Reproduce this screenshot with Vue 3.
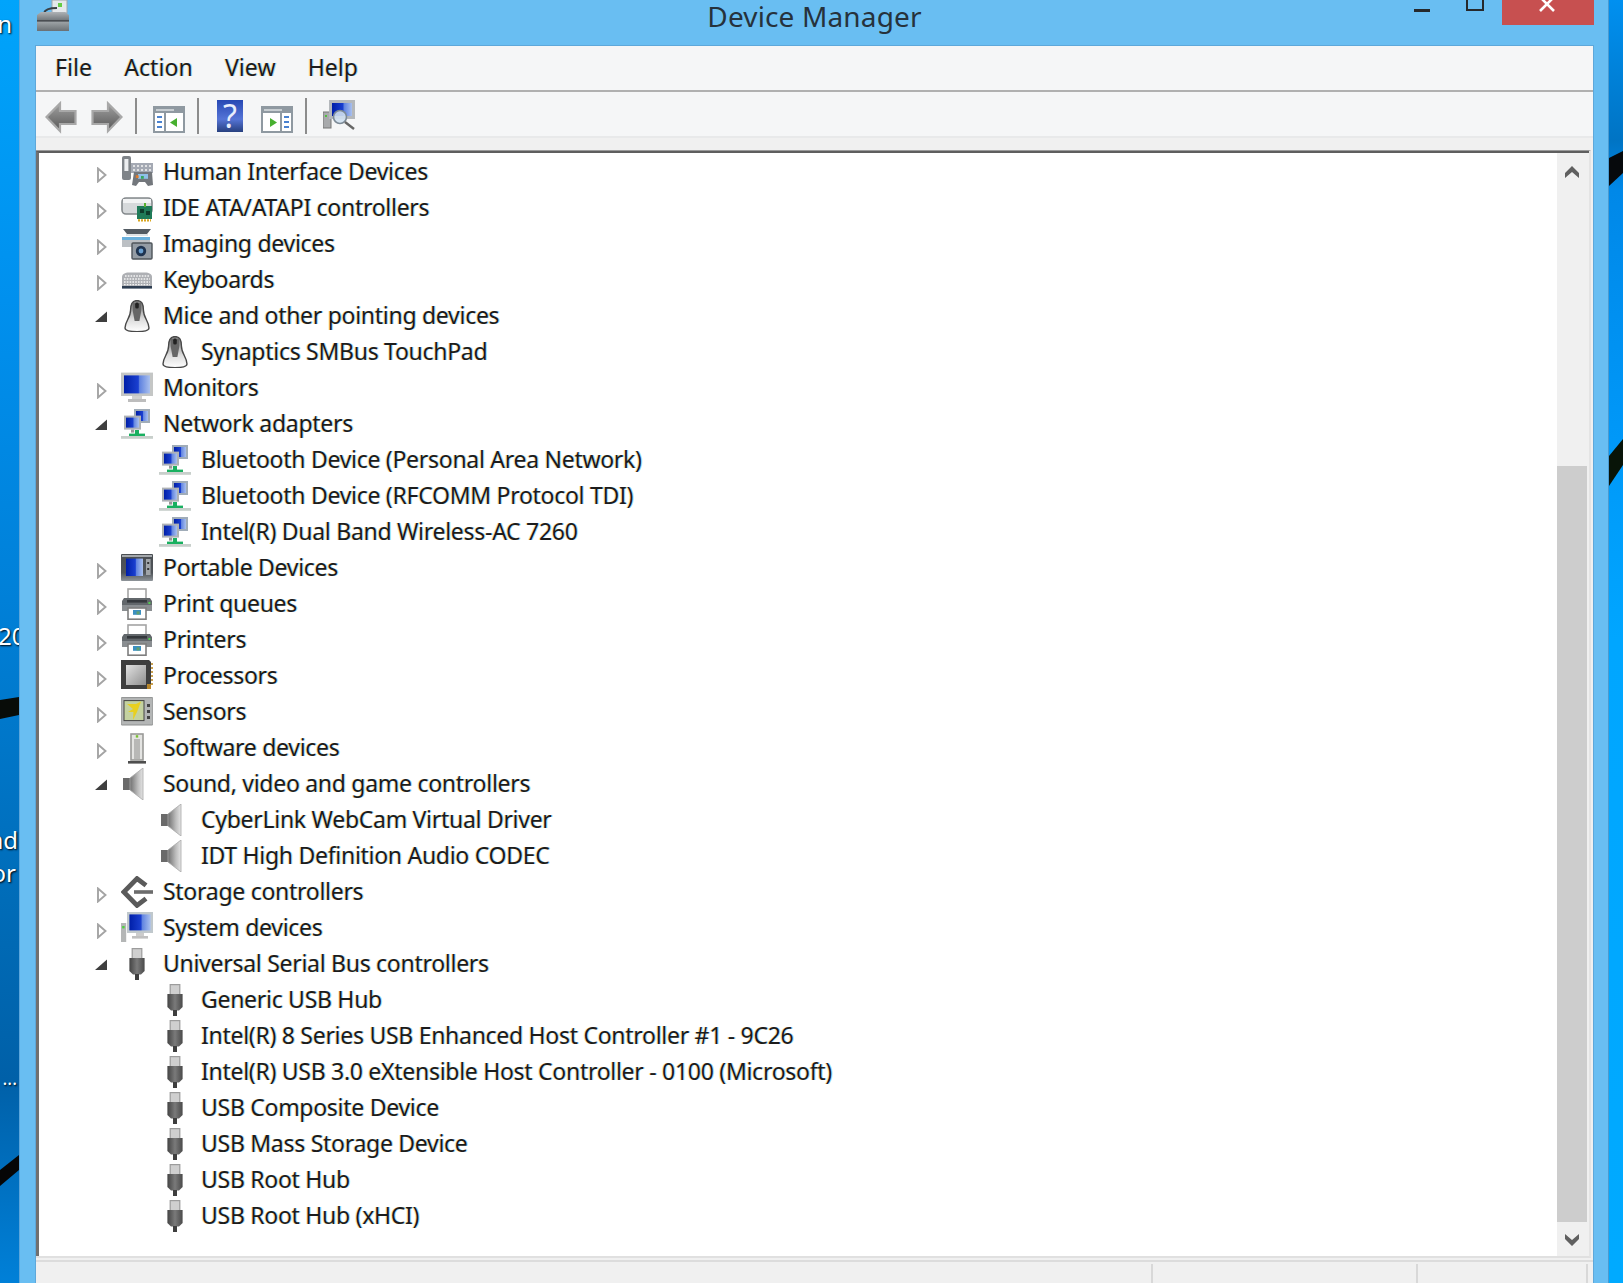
<script setup>
const rows = [
  { t: 'Human Interface Devices', i: 'hid', e: 'c' },
  { t: 'IDE ATA/ATAPI controllers', i: 'ide', e: 'c' },
  { t: 'Imaging devices', i: 'imaging', e: 'c' },
  { t: 'Keyboards', i: 'keyboard', e: 'c' },
  { t: 'Mice and other pointing devices', i: 'mouse', e: 'o' },
  { t: 'Synaptics SMBus TouchPad', i: 'mouse' },
  { t: 'Monitors', i: 'monitor', e: 'c' },
  { t: 'Network adapters', i: 'network', e: 'o' },
  { t: 'Bluetooth Device (Personal Area Network)', i: 'network' },
  { t: 'Bluetooth Device (RFCOMM Protocol TDI)', i: 'network' },
  { t: 'Intel(R) Dual Band Wireless-AC 7260', i: 'network' },
  { t: 'Portable Devices', i: 'portable', e: 'c' },
  { t: 'Print queues', i: 'printer', e: 'c' },
  { t: 'Printers', i: 'printer', e: 'c' },
  { t: 'Processors', i: 'cpu', e: 'c' },
  { t: 'Sensors', i: 'sensor', e: 'c' },
  { t: 'Software devices', i: 'software', e: 'c' },
  { t: 'Sound, video and game controllers', i: 'speaker', e: 'o' },
  { t: 'CyberLink WebCam Virtual Driver', i: 'speaker' },
  { t: 'IDT High Definition Audio CODEC', i: 'speaker' },
  { t: 'Storage controllers', i: 'storage', e: 'c' },
  { t: 'System devices', i: 'system', e: 'c' },
  { t: 'Universal Serial Bus controllers', i: 'usb', e: 'o' },
  { t: 'Generic USB Hub', i: 'usb' },
  { t: 'Intel(R) 8 Series USB Enhanced Host Controller #1 - 9C26', i: 'usb' },
  { t: 'Intel(R) USB 3.0 eXtensible Host Controller - 0100 (Microsoft)', i: 'usb' },
  { t: 'USB Composite Device', i: 'usb' },
  { t: 'USB Mass Storage Device', i: 'usb' },
  { t: 'USB Root Hub', i: 'usb' },
  { t: 'USB Root Hub (xHCI)', i: 'usb' },
]
const menus = ['File', 'Action', 'View', 'Help']
</script>

<template>
  <div class="screen">
    <svg class="defs" width="0" height="0" aria-hidden="true">
      <defs>
        <linearGradient id="gScreen" x1="0" x2="1" y1="0" y2="0"><stop offset="0" stop-color="#001fa8"/><stop offset=".55" stop-color="#1a3fd0"/><stop offset=".6" stop-color="#5f82e0"/><stop offset="1" stop-color="#a9c0ee"/></linearGradient>
        <linearGradient id="gUsb" x1="0" x2="1" y1="0" y2="0"><stop offset="0" stop-color="#444"/><stop offset=".5" stop-color="#7a7a7a"/><stop offset="1" stop-color="#4a4a4a"/></linearGradient>
        <linearGradient id="gMouse" x1="0" x2="0" y1="0" y2="1"><stop offset="0" stop-color="#7a7a7a"/><stop offset=".6" stop-color="#dcdcdc"/><stop offset="1" stop-color="#fff"/></linearGradient>
        <linearGradient id="gCone" x1="0" x2="1" y1="0" y2="0"><stop offset="0" stop-color="#707070"/><stop offset=".6" stop-color="#bcbcbc"/><stop offset="1" stop-color="#e4e4e4"/></linearGradient>
        <linearGradient id="gCpu" x1="0" x2="1" y1="0" y2="1"><stop offset="0" stop-color="#e2e2e2"/><stop offset="1" stop-color="#8e8e8e"/></linearGradient>
        <linearGradient id="gArrow" x1="0" x2="0" y1="0" y2="1"><stop offset="0" stop-color="#a0a0a0"/><stop offset=".5" stop-color="#7c7c7c"/><stop offset="1" stop-color="#565656"/></linearGradient>
        <linearGradient id="gHelp" x1="0" x2="0" y1="0" y2="1"><stop offset="0" stop-color="#2748b4"/><stop offset=".6" stop-color="#5574d6"/><stop offset="1" stop-color="#27407f"/></linearGradient>
        <linearGradient id="gBox" x1="0" x2="0" y1="0" y2="1"><stop offset="0" stop-color="#aeb2b5"/><stop offset=".45" stop-color="#70767a"/><stop offset=".55" stop-color="#9aa0a3"/><stop offset="1" stop-color="#6a7074"/></linearGradient>
        <linearGradient id="gPort" x1="0" x2="0" y1="0" y2="1"><stop offset="0" stop-color="#4a4e52"/><stop offset=".7" stop-color="#50555a"/><stop offset="1" stop-color="#8f959a"/></linearGradient>

        <symbol id="hid" viewBox="0 0 16 16">
          <rect x=".5" y="0" width="4.5" height="12" rx="1" fill="#7f8489"/>
          <rect x="1.700" y="1.500" width="2" height="6" fill="#eceef0"/>
          <rect x="5" y="3.500" width="11" height="5" fill="#a4a9b3"/>
          <path d="M6 5h9M6 7h9" stroke="#f4f4f4" stroke-width=".8" stroke-dasharray="1 1"/>
          <path d="M6.500 8h9l.5 6.500-2.500.5-1.500-2h-3l-1.500 2-2-.5z" fill="#73777c"/>
          <rect x="8.500" y="9" width="5" height="2.400" fill="#8fc0e8"/>
          <rect x="7.400" y="9.600" width="1.400" height="1.400" fill="#e07a2a"/>
          <rect x="10" y="10" width="1.400" height="1.400" fill="#38a860"/>
        </symbol>
        <symbol id="ide" viewBox="0 0 16 16">
          <rect x=".5" y="3" width="15" height="8" rx="2" fill="#d6d9db" stroke="#84898c" stroke-width=".8"/>
          <rect x="1" y="3.500" width="14" height="2" fill="#f2f3f4"/>
          <rect x="8" y="7" width="7.500" height="6.500" fill="#1f7a58"/>
          <rect x="11.500" y="5.500" width="1" height="2" fill="#57b030"/>
          <rect x="9.500" y="8.500" width="2" height="2" fill="#0e3c2c"/>
          <rect x="12.500" y="9.500" width="2" height="2" fill="#0e3c2c"/>
          <path d="M8.500 14.200h6.500" stroke="#d8a520" stroke-width="1.200" stroke-dasharray="1 .5"/>
        </symbol>
        <symbol id="imaging" viewBox="0 0 16 16">
          <path d="M1 .5h14l-2 2.500H3z" fill="#535b63"/>
          <rect x="2.500" y="3" width="11" height="1" fill="#dfe3e6"/>
          <rect x=".5" y="4.500" width="14" height="1.500" fill="#6ab0dc"/>
          <rect x=".5" y="6" width="14" height="3.500" fill="#bcc0c4"/>
          <rect x="5.500" y="7.500" width="10" height="8" rx=".5" fill="#949ca4" stroke="#4e545a" stroke-width=".7"/>
          <circle cx="10" cy="11.500" r="2.600" fill="#1f3450"/>
          <circle cx="10" cy="11.500" r="1.200" fill="#6aa0d0"/>
        </symbol>
        <symbol id="keyboard" viewBox="0 0 16 16">
          <path d="M.5 11.500V6.500C.5 5 2 4.200 4 4.200h8c2 0 3.500.8 3.500 2.300v5z" fill="#aeb0b4"/>
          <path d="M2 6h12M1.500 7.500h13M1.500 9h13M1.500 10.300h13" stroke="#f4f4f4" stroke-width=".7" stroke-dasharray=".8 .6"/>
          <rect x=".5" y="11" width="15" height="1.300" fill="#2e3e52"/>
        </symbol>
        <symbol id="mouse" viewBox="0 0 16 16">
          <path d="M8 .3C5.500.3 4.800 2 4.800 5c0 4-2.800 5.600-2.800 9 0 1.500 3 1.800 6 1.800s6-.3 6-1.800c0-3.400-2.800-5-2.800-9C11.200 2 10.500.3 8 .3z" fill="url(#gMouse)" stroke="#484848" stroke-width=".7"/>
          <path d="M5.800 1.500h4.400v3.500l-1 5.500H6.800l-1-5.500z" fill="#666"/>
          <rect x="7.100" y="1.300" width="1.800" height="3" rx=".8" fill="#222"/>
        </symbol>
        <symbol id="monitor" viewBox="0 0 16 16">
          <rect x="0" y=".3" width="16" height="11.700" fill="#c4c6c5"/>
          <rect x="1.500" y="1.700" width="13" height="9" fill="url(#gScreen)"/>
          <rect x="5.500" y="12" width="5" height="1.500" fill="#d0d0d0"/>
          <rect x="3.500" y="13.500" width="9" height="1.500" fill="#bdbdbd"/>
        </symbol>
        <symbol id="network" viewBox="0 0 16 16">
          <rect x="6.500" y=".5" width="8" height="7" fill="#a0acb8"/>
          <rect x="7.500" y="1.500" width="6" height="5" fill="url(#gScreen)"/>
          <rect x="1.500" y="3.800" width="8.500" height="7" fill="#aeb2b6"/>
          <rect x="2.500" y="4.800" width="6.500" height="5" fill="url(#gScreen)"/>
          <rect x="5" y="10.800" width="1.600" height="1.500" fill="#999"/>
          <rect x="7" y="11" width="2" height="3" fill="#19b060"/>
          <rect x="4" y="12.800" width="8" height="1.800" fill="#19b060"/>
          <rect x="0" y="14" width="16" height="1.400" fill="#c8cfcb"/>
        </symbol>
        <symbol id="portable" viewBox="0 0 16 16">
          <rect x="0" y="1" width="16" height="13.500" rx=".5" fill="url(#gPort)"/>
          <rect x=".5" y="1.500" width="15" height="1" fill="#a4a8ac"/>
          <rect x="2.500" y="3.300" width="8.500" height="8.700" fill="url(#gScreen)"/>
          <rect x="12.500" y="3.500" width="2.300" height="8" fill="#a0a4a8"/>
          <rect x="13.100" y="5" width="1" height="1" fill="#333"/>
          <rect x="13.100" y="8" width="1" height="1" fill="#333"/>
        </symbol>
        <symbol id="printer" viewBox="0 0 16 16">
          <rect x="3.500" y=".5" width="9" height="5.500" fill="#fff" stroke="#a4a4a4" stroke-width=".8"/>
          <path d="M1.500 5h13l1 1.500V11.500h-15V6.500z" fill="#62676b"/>
          <rect x=".5" y="8.500" width="15" height="3" fill="#8a8e91"/>
          <rect x="3" y="6" width="10" height="1.300" fill="#34383c"/>
          <rect x="13.700" y="7" width="1" height="1" fill="#52d050"/>
          <rect x="3.500" y="10" width="9" height="5.600" fill="#fff" stroke="#7e7e7e" stroke-width=".8"/>
          <rect x="6" y="11" width="4" height="2.400" fill="#3c90c0"/>
          <rect x="7.800" y="11.700" width="1.500" height="1.500" fill="#60a070"/>
        </symbol>
        <symbol id="cpu" viewBox="0 0 16 16">
          <path d="M0 0h14l1 1v13.500H0z" fill="#3e3e3e"/>
          <rect x="2.500" y="2.500" width="10" height="10" fill="url(#gCpu)"/>
          <rect x="13" y="12" width="2" height="2.500" fill="#b8862a"/>
          <path d="M15.500 1.500v11" stroke="#c8a050" stroke-width="1" stroke-dasharray="1 1"/>
        </symbol>
        <symbol id="sensor" viewBox="0 0 16 16">
          <rect x="0" y=".8" width="16" height="13.700" rx=".5" fill="#b4b6b6" stroke="#8e9090" stroke-width=".5"/>
          <rect x="1.500" y="2.300" width="10" height="10" fill="#c4d2a0" stroke="#444" stroke-width=".5"/>
          <path d="M3 4h4.500L10 2.800 8 8 6 12 6.200 8H3.500L6 6.500z" fill="#e8d020"/>
          <rect x="13" y="4" width="1.500" height="1.500" fill="#444"/>
          <rect x="13" y="7" width="1.500" height="1.500" fill="#444"/>
          <rect x="13" y="10" width="1.500" height="1.500" fill="#444"/>
        </symbol>
        <symbol id="software" viewBox="0 0 16 16">
          <rect x="5" y="1" width="6" height="13" fill="#e4e4e2" stroke="#9a9a98" stroke-width=".8"/>
          <rect x="6.500" y="3.500" width="3" height="10" fill="#b8b8b6"/>
          <rect x="7.400" y="1.600" width="1.200" height="1.200" fill="#78c030"/>
          <rect x="3.500" y="14.500" width="9" height="1.300" fill="#4e4e4e"/>
        </symbol>
        <symbol id="speaker" viewBox="0 0 16 16">
          <rect x="1" y="5" width="3.800" height="6" fill="#6a6a6a"/>
          <path d="M4.500 5 11 0v16l-6.500-5z" fill="url(#gCone)" stroke="#a8a8a8" stroke-width=".4"/>
        </symbol>
        <symbol id="storage" viewBox="0 0 16 16">
          <path d="M12.500 4.700 8 1.300 1.400 8 8 14.700l4.500-3.400" fill="none" stroke="#5a5a5a" stroke-width="2.400"/>
          <rect x="6.500" y="7.100" width="9.500" height="1.800" fill="#6c6c6c"/>
        </symbol>
        <symbol id="system" viewBox="0 0 16 16">
          <rect x="0" y="5.500" width="2.600" height="9.500" fill="#b4b6b6"/>
          <rect x=".6" y="7" width="1.200" height="1.200" fill="#50d040"/>
          <rect x="3" y="0" width="13" height="10.500" fill="#c0c8cc"/>
          <rect x="4.200" y="1.200" width="10.600" height="8" fill="url(#gScreen)"/>
          <rect x="7.500" y="10.500" width="4" height="1.500" fill="#ccc"/>
          <rect x="5.500" y="12" width="8" height="1.300" fill="#c0c0c0"/>
        </symbol>
        <symbol id="usb" viewBox="0 0 16 16">
          <rect x="5.600" y=".3" width="4.800" height="5" fill="#cfcfcf" stroke="#9c9c9c" stroke-width=".6"/>
          <path d="M4.200 5h7.600v6.500L10 13.300H6l-1.800-1.800z" fill="url(#gUsb)"/>
          <rect x="7" y="13" width="2" height="3" fill="#3e3e3e"/>
        </symbol>
      </defs>
    </svg>

    <div class="strip strip-left">
      <svg class="bands" viewBox="0 0 19 1283" width="19" height="1283" aria-hidden="true">
        <path d="M0 700 19 697V715L0 719Z" fill="#080c08"/>
        <path d="M0 1170 19 1155V1170L0 1186Z" fill="#060606"/>
      </svg>
      <span class="dlabel l1">n</span>
      <span class="dlabel l2">20</span>
      <span class="dlabel l3">nd</span>
      <span class="dlabel l4">or</span>
      <span class="dlabel l5">...</span>
    </div>

    <div class="window">
      <header class="titlebar">
        <div class="tb-left">
          <svg class="app-icon" viewBox="0 0 32 31" width="32" height="31" aria-hidden="true">
            <rect x="15" y="0" width="15" height="13" fill="#e4e8ea" stroke="#a0a4a8"/>
            <rect x="21" y="3" width="4" height="4" fill="#66cc44"/>
            <path d="M7 13C8 9 14 8 20 8" fill="none" stroke="#3a3f44" stroke-width="2"/>
            <path d="M0 15 4 12h24l4 3v16H0z" fill="url(#gBox)"/>
            <rect x="0" y="20" width="32" height="1.500" fill="#4a4e52"/>
          </svg>
        </div>
        <div class="title">Device Manager</div>
        <div class="controls">
          <span class="ctl-min"></span>
          <span class="ctl-max"></span>
          <span class="ctl-close">
            <svg viewBox="0 0 92 25" width="92" height="25" aria-hidden="true">
              <path d="M38 -3 52 11M52 -3 38 11" stroke="#fff" stroke-width="2.600"/>
            </svg>
          </span>
        </div>
      </header>

      <div class="client">
        <nav class="menubar">
          <span v-for="m in menus" :key="m" class="menu-item fringe">{{ m }}</span>
        </nav>

        <div class="toolbar">
          <svg class="tool back" viewBox="0 0 32 36" width="32" height="36" aria-hidden="true">
            <path d="M1.500 19 15 5.500V13H30.500V26H15v7z" fill="url(#gArrow)" stroke="#a8a8a8" stroke-width="2.200"/>
          </svg>
          <svg class="tool fwd" viewBox="0 0 32 36" width="32" height="36" aria-hidden="true">
            <path d="M30.500 19 17 5.500V13H1.500V26H17v7z" fill="url(#gArrow)" stroke="#a8a8a8" stroke-width="2.200"/>
          </svg>
          <span class="sep"></span>
          <svg class="tool pane1" viewBox="0 0 32 36" width="32" height="36" aria-hidden="true">
            <rect x="1" y="9" width="30" height="25" fill="#fff" stroke="#8f99a1" stroke-width="2"/>
            <rect x="1" y="9" width="30" height="6" fill="#8f99a1"/>
            <rect x="3" y="11" width="18" height="2" fill="#c8ced2"/>
            <rect x="11" y="15" width="2" height="18" fill="#8f99a1"/>
            <path d="M4 19h5M4 24h5M4 29h5" stroke="#4a82d0" stroke-width="2"/>
            <path d="M24 20v9l-7-4.500z" fill="#48b030"/>
          </svg>
          <span class="sep"></span>
          <svg class="tool help" viewBox="0 0 26 36" width="26" height="36" aria-hidden="true">
            <rect x="0" y="2" width="26" height="32" fill="url(#gHelp)"/>
            <text x="13" y="30" text-anchor="middle" class="q">?</text>
          </svg>
          <svg class="tool pane2" viewBox="0 0 32 36" width="32" height="36" aria-hidden="true">
            <rect x="1" y="9" width="30" height="25" fill="#fff" stroke="#8f99a1" stroke-width="2"/>
            <rect x="1" y="9" width="30" height="6" fill="#8f99a1"/>
            <rect x="3" y="11" width="18" height="2" fill="#c8ced2"/>
            <rect x="19" y="15" width="2" height="18" fill="#8f99a1"/>
            <path d="M23 19h5M23 24h5M23 29h5" stroke="#4a82d0" stroke-width="2"/>
            <path d="M9 20v9l7-4.500z" fill="#48b030"/>
          </svg>
          <span class="sep"></span>
          <svg class="tool scan" viewBox="0 0 32 36" width="32" height="36" aria-hidden="true">
            <rect x="0" y="14" width="8" height="16" fill="#a8aaac" stroke="#777"/>
            <rect x="2" y="17" width="2" height="2" fill="#50c040"/>
            <rect x="6" y="2" width="26" height="19" fill="#b4b8bc"/>
            <rect x="9" y="5" width="20" height="13" fill="url(#gScreen)"/>
            <circle cx="17" cy="19" r="6.500" fill="#cfe0ee" fill-opacity=".9" stroke="#7c8a96" stroke-width="1.600"/>
            <path d="M22 24 31 31" stroke="#666" stroke-width="2.400"/>
          </svg>
        </div>
        <div class="toolbar-line"></div>

        <div class="tree-frame">
          <div class="tree">
            <div class="tree-list">
              <div v-for="r in rows" :key="r.t" class="row" :class="{ child: !r.e }">
                <span class="exp">
                  <svg v-if="r.e === 'c'" class="exp-c" viewBox="0 0 12 16" width="12" height="16" aria-hidden="true">
                    <path d="M3 1.500 10.500 8 3 14.500z" fill="#fff" stroke="#a4a4a4" stroke-width="1.900"/>
                  </svg>
                  <svg v-else-if="r.e === 'o'" class="exp-o" viewBox="0 0 12 16" width="12" height="16" aria-hidden="true">
                    <path d="M0 13 12 2.500V13z" fill="#3e3e3e"/>
                  </svg>
                </span>
                <svg class="row-icon" width="32" height="32" aria-hidden="true"><use :href="'#' + r.i"/></svg>
                <span class="row-text fringe">{{ r.t }}</span>
              </div>
            </div>
            <div class="scrollbar">
              <div class="sb-btn sb-up">
                <svg viewBox="0 0 14 12" width="14" height="12" aria-hidden="true">
                  <path d="M7 0 14 7v5L7 6 0 12V7z" fill="#606060"/>
                </svg>
              </div>
              <div class="sb-gap"></div>
              <div class="sb-thumb"></div>
              <div class="sb-btn sb-down">
                <svg viewBox="0 0 14 12" width="14" height="12" aria-hidden="true">
                  <path d="M7 12 14 5V0L7 6 0 0V5z" fill="#606060"/>
                </svg>
              </div>
            </div>
          </div>
        </div>

        <footer class="statusbar">
          <span class="st st1"></span>
          <span class="st st2"></span>
          <span class="st st3"></span>
        </footer>
      </div>
    </div>

    <div class="strip strip-right">
      <svg class="bands" viewBox="0 0 14 1283" width="14" height="1283" aria-hidden="true">
        <path d="M0 158 14 151V173L0 186Z" fill="#06090c"/>
        <path d="M0 456 14 439V465L0 486Z" fill="#081408"/>
      </svg>
    </div>
  </div>
</template>

<style>
html, body { margin: 0; padding: 0; overflow: hidden; }
</style>

<style scoped>
.screen {
  display: flex;
  width: 1623px;
  height: 1283px;
  overflow: hidden;
  font-family: "Noto Sans", sans-serif;
  color: #1c1c1c;
}
.defs { position: absolute; }
.strip { position: relative; overflow: hidden; flex: none; }
.strip-left {
  width: 19px;
  background: linear-gradient(180deg, #00a4fb 0, #0090ee 300px, #0080d8 600px, #006cb8 900px, #0060a8 1080px, #0078cc 1230px, #0080d8 1283px);
}
.strip-right {
  width: 14px;
  background: linear-gradient(180deg, #0090f0 0, #0074c4 140px, #0088e8 190px, #0098f8 440px, #00a6ff 640px, #00aaff 1283px);
}
.bands { position: absolute; left: 0; top: 0; }
.dlabel {
  position: absolute;
  font-size: 24px;
  line-height: 30px;
  color: #fff;
  text-shadow: 1px 1px 2px #000;
  white-space: nowrap;
}
.l1 { right: 7px; top: 9px; }
.l2 { left: -2px; top: 621px; }
.l3 { right: 1px; top: 825px; }
.l4 { right: 3px; top: 858px; }
.l5 { right: 2px; top: 1063px; font-size: 18px; }

.window {
  flex: 1;
  min-width: 0;
  display: flex;
  flex-direction: column;
  background: #69bef2;
  border-left: 1px solid #5aa6dc;
  border-right: 1px solid #4a9ad0;
  padding: 0 14px 0 15px;
}
.titlebar {
  flex: none;
  height: 45px;
  display: grid;
  grid-template-columns: 1fr auto 1fr;
  align-items: start;
}
.tb-left { display: flex; }
.app-icon { margin-left: 2px; }
.title {
  font-size: 28px;
  line-height: 32px;
  color: #26323c;
  letter-spacing: .14px;
}
.controls { display: flex; justify-content: flex-end; align-items: flex-start; margin-right: 0; }
.ctl-min { width: 16px; height: 3px; margin-top: 9px; margin-right: 36px; background: #26292c; }
.ctl-max { width: 14px; height: 9px; border: 2px solid #26292c; border-top: none; margin-right: 18px; }
.ctl-close { width: 92px; height: 25px; background: #c75050; display: block; }
.ctl-close svg { display: block; }

.client {
  flex: 1;
  min-height: 0;
  display: flex;
  flex-direction: column;
  background: #f0f0f0;
  border: 1px solid #5ea8da;
  border-bottom: none;
}
.menubar {
  flex: none;
  height: 44px;
  display: flex;
  align-items: center;
  gap: 32px;
  padding-left: 19px;
  padding-bottom: 0;
  background: #f5f6f7;
  border-bottom: 2px solid #b0b0b0;
  box-sizing: content-box;
  font-size: 23px;
  letter-spacing: .1px;
}
.menu-item { margin-top: -2px; }
.fringe { text-shadow: -1px 0 rgba(255, 190, 60, .42), 1px 0 rgba(50, 180, 255, .42); }
.toolbar {
  flex: none;
  height: 38px;
  padding: 6px 0 0 9px;
  display: flex;
  align-items: flex-start;
  background: #f5f6f7;
}
.tool { flex: none; display: block; }
.fwd { margin-left: 14px; }
.sep { flex: none; width: 2px; height: 36px; margin: 0 16px 0 12px; background: #8c8c8c; }
.help { margin-left: 2px; }
.pane2 { margin-left: 18px; }
.q { font: 400 32px "Noto Sans", sans-serif; fill: #e8eefc; }
.toolbar-line { flex: none; height: 2px; margin-bottom: 12px; background: #e8e9ea; }

.tree-frame {
  flex: 1;
  min-height: 0;
  display: flex;
  margin-right: 2px;
  border-top: 1px solid #9a9a9a;
  border-right: 2px solid #e4e4e4;
  border-bottom: 2px solid #e0e0e0;
}
.tree {
  flex: 1;
  min-width: 0;
  display: flex;
  background: #fff;
  border-top: 2px solid #5e5e5e;
  border-left: 3px solid #707070;
}
.tree-list { flex: 1; min-width: 0; padding-top: 1px; }
.row {
  height: 36px;
  display: flex;
  align-items: center;
  padding-left: 56px;
  font-size: 23px;
  letter-spacing: -.28px;
  white-space: nowrap;
}
.exp { flex: none; width: 14px; height: 16px; margin-right: 12px; display: block; }
.exp svg { display: block; }
.exp-c { margin-top: 3px; }
.exp-o { margin-top: 1px; }
.row.child .row-icon { margin-left: 38px; }
.row-icon { flex: none; }
.row-text { margin-left: 10px; padding-bottom: 2px; }
.scrollbar {
  flex: none;
  width: 32px;
  display: flex;
  flex-direction: column;
  background: #f0f0f0;
}
.sb-btn { flex: none; width: 30px; display: flex; justify-content: center; }
.sb-up { height: 36px; padding-top: 13px; box-sizing: border-box; }
.sb-gap { flex: none; height: 277px; }
.sb-thumb { flex: none; width: 30px; height: 756px; background: #cdcdcd; }
.sb-down { flex: 1; padding-top: 12px; box-sizing: border-box; }

.statusbar {
  flex: none;
  height: 23px;
  box-sizing: border-box;
  margin-top: 2px;
  padding-top: 2px;
  position: relative;
  display: flex;
  background: #f0f0f0;
  border-top: 2px solid #dcdcdc;
}
.st { flex: none; width: 2px; background: #d8d8d8; }
.st1 { margin-left: 1115px; }
.st2 { margin-left: 263px; }
.st3 { margin-left: 168px; }
</style>
